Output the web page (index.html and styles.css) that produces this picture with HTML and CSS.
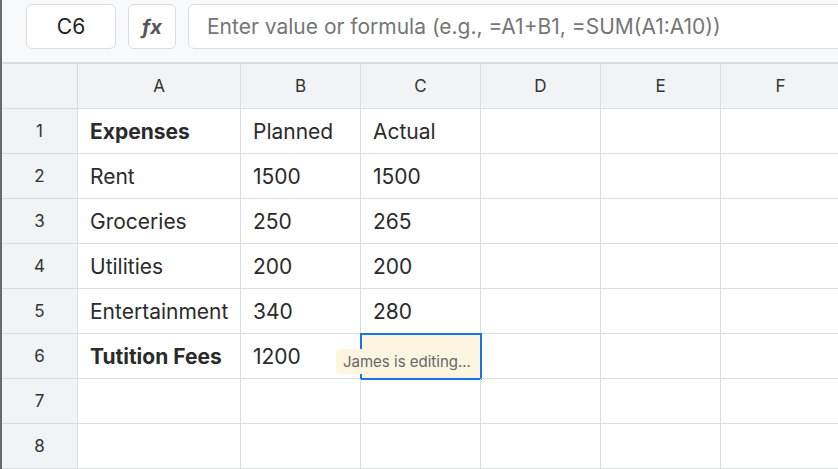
FILE: index.html
```html
<!DOCTYPE html>
<html lang="en">
<head>
    <meta charset="UTF-8">
    <meta name="viewport" content="width=device-width, initial-scale=1.0">
    <title>Sheet</title>
    <link rel="stylesheet" href="styles.css">
</head>
<body>
    <div class="toolbar">
        <div class="name-box">C6</div>
        <div class="fx-box">fx</div>
        <div class="formula-input">Enter value or formula (e.g., =A1+B1, =SUM(A1:A10))</div>
    </div>

    <div class="grid">
        <div class="corner"></div>
        <div class="col-head">A</div>
        <div class="col-head">B</div>
        <div class="col-head">C</div>
        <div class="col-head">D</div>
        <div class="col-head">E</div>
        <div class="col-head">F</div>

        <div class="row-head">1</div>
        <div class="cell bold">Expenses</div>
        <div class="cell">Planned</div>
        <div class="cell">Actual</div>
        <div class="cell"></div>
        <div class="cell"></div>
        <div class="cell"></div>

        <div class="row-head">2</div>
        <div class="cell">Rent</div>
        <div class="cell">1500</div>
        <div class="cell">1500</div>
        <div class="cell"></div>
        <div class="cell"></div>
        <div class="cell"></div>

        <div class="row-head">3</div>
        <div class="cell">Groceries</div>
        <div class="cell">250</div>
        <div class="cell">265</div>
        <div class="cell"></div>
        <div class="cell"></div>
        <div class="cell"></div>

        <div class="row-head">4</div>
        <div class="cell">Utilities</div>
        <div class="cell">200</div>
        <div class="cell">200</div>
        <div class="cell"></div>
        <div class="cell"></div>
        <div class="cell"></div>

        <div class="row-head">5</div>
        <div class="cell">Entertainment</div>
        <div class="cell">340</div>
        <div class="cell">280</div>
        <div class="cell"></div>
        <div class="cell"></div>
        <div class="cell"></div>

        <div class="row-head">6</div>
        <div class="cell bold">Tutition Fees</div>
        <div class="cell">1200</div>
        <div class="cell selected">
            <span class="presence">James is editing...</span>
        </div>
        <div class="cell"></div>
        <div class="cell"></div>
        <div class="cell"></div>

        <div class="row-head">7</div>
        <div class="cell"></div>
        <div class="cell"></div>
        <div class="cell"></div>
        <div class="cell"></div>
        <div class="cell"></div>
        <div class="cell"></div>

        <div class="row-head">8</div>
        <div class="cell"></div>
        <div class="cell"></div>
        <div class="cell"></div>
        <div class="cell"></div>
        <div class="cell"></div>
        <div class="cell"></div>
    </div>
</body>
</html>
```

FILE: styles.css
```css
* {
    margin: 0;
    padding: 0;
    box-sizing: border-box;
    font-family: 'Inter', 'Noto Sans', sans-serif;
}

body {
    width: 838px;
    height: 469px;
    overflow: hidden;
    background: #fff;
    border-left: 2px solid #6b6b6b;
    color: #2b2b2b;
}

.toolbar {
    display: flex;
    align-items: flex-start;
    gap: 12px;
    height: 64px;
    padding: 4px 0 0 24px;
    background: #f8f9fa;
    border-bottom: 2px solid #dadce0;
    overflow: hidden;
}

.name-box,
.fx-box,
.formula-input {
    flex-shrink: 0;
    height: 45px;
    background: #fff;
    border: 1px solid #dcdde0;
    border-radius: 6px;
    display: flex;
    align-items: center;
    font-size: 21px;
}

.name-box {
    width: 90px;
    justify-content: center;
    color: #222;
}

.fx-box {
    width: 48px;
    justify-content: center;
    font-style: italic;
    font-weight: 700;
    font-size: 20px;
    color: #555;
}

.formula-input {
    width: 700px;
    padding-left: 18px;
    color: #767676;
    white-space: nowrap;
}

.grid {
    display: grid;
    grid-template-columns: 76px 163px 120px 120px 120px 120px 120px;
    grid-auto-rows: 45px;
}

.corner,
.col-head,
.row-head {
    background: #f1f3f4;
    border-right: 1px solid #dadce0;
    border-bottom: 1px solid #dadce0;
}

.col-head {
    display: flex;
    align-items: center;
    justify-content: center;
    font-size: 17px;
    color: #333;
}

.row-head {
    display: flex;
    align-items: center;
    justify-content: center;
    font-size: 17px;
    color: #333;
}

.cell {
    position: relative;
    display: flex;
    align-items: center;
    padding-left: 12px;
    font-size: 21px;
    color: #2b2b2b;
    border-right: 1px solid #dadce0;
    border-bottom: 1px solid #dadce0;
    white-space: nowrap;
}

.cell.bold {
    font-weight: 700;
}

.cell.selected {
    background: #fdf5e0;
    outline: 2px solid #1a73e8;
    outline-offset: -1px;
    overflow: visible;
}

.presence {
    position: absolute;
    left: -25px;
    top: 15px;
    padding: 3px 7px;
    background: #fdf5e0;
    border-radius: 4px;
    font-size: 15px;
    color: #666;
}
```
